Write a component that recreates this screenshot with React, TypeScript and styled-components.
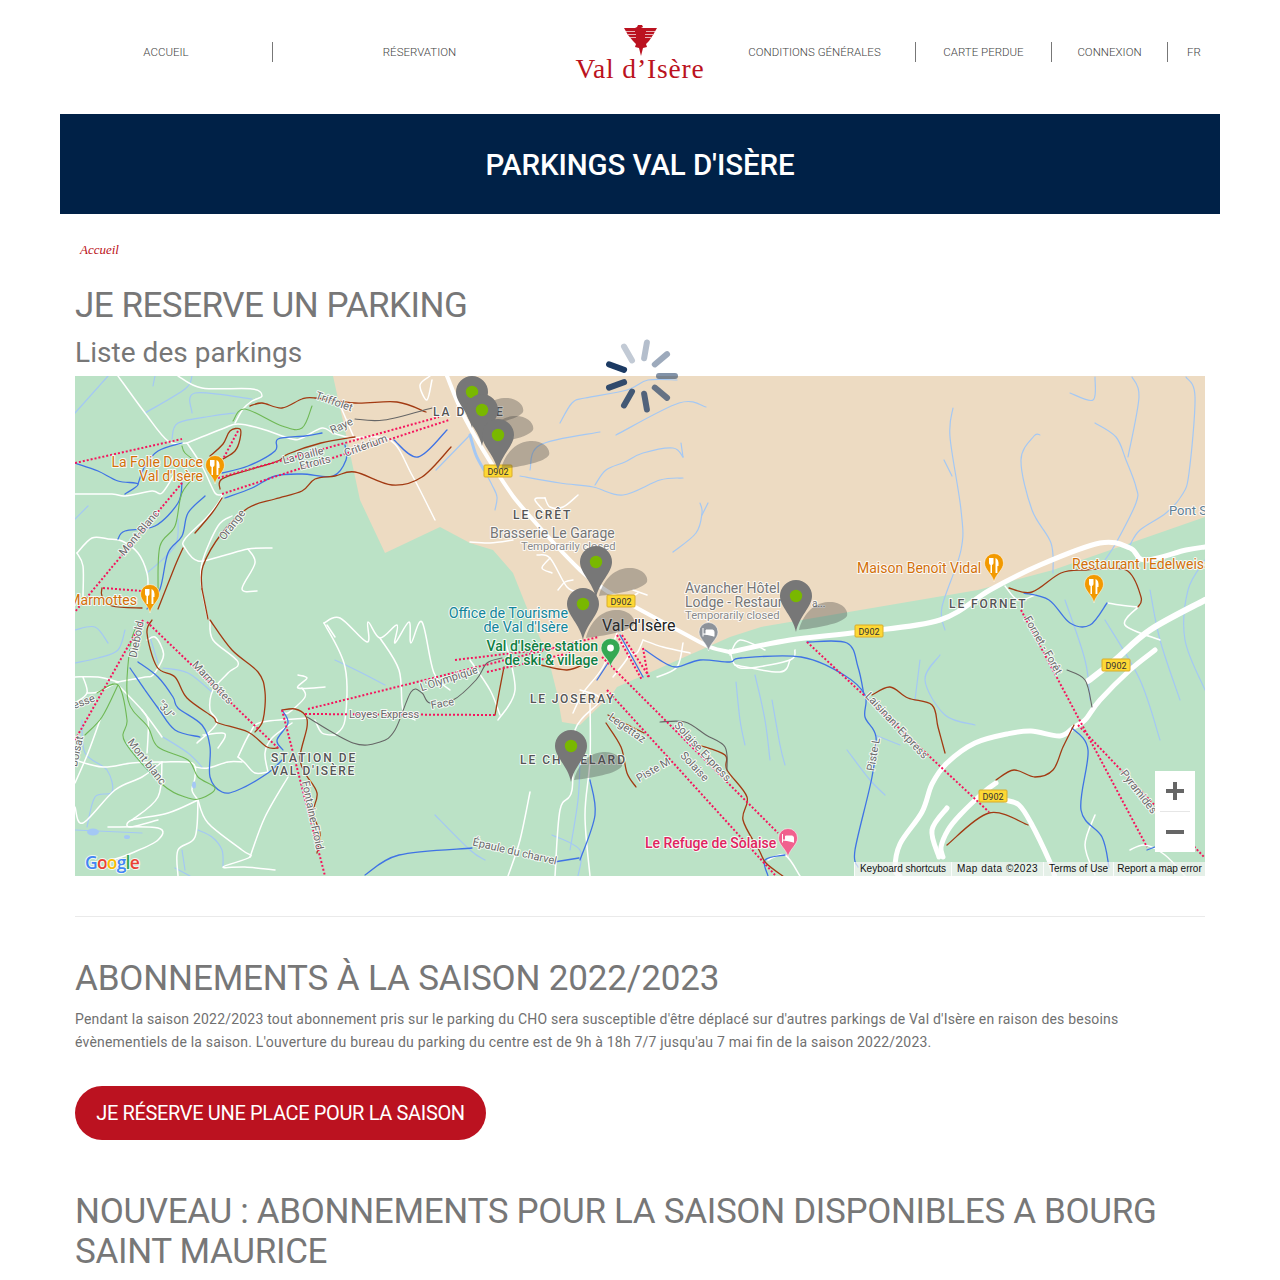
import React from "react";
import styled, { createGlobalStyle } from "styled-components";

const Global = createGlobalStyle`
  html, body { margin: 0; padding: 0; background: #fff; }
  body { font-family: Roboto, "Open Sans", sans-serif; color: #777; overflow-x: hidden; }
  * { box-sizing: border-box; }
`;

const Header = styled.header`
  height: 114px;
  margin: 0 60px;
  display: flex;
  align-items: center;
`;
const NavItem = styled.a<{ $w: number; $sep?: boolean }>`
  width: ${(p) => p.$w}px;
  height: 20px;
  margin-top: -10px;
  display: flex;
  align-items: center;
  justify-content: center;
  font-size: 11.5px;
  font-weight: 300;
  letter-spacing: 0;
  color: #444;
  border-right: ${(p) => (p.$sep ? "1px solid #777" : "none")};
`;
const Logo = styled.div`
  width: 148px;
  height: 114px;
  display: flex;
  flex-direction: column;
  align-items: center;
  padding-top: 25px;
`;
const LogoText = styled.div`
  font-family: "Liberation Serif", serif;
  font-size: 27.5px;
  line-height: 26px;
  letter-spacing: 0.85px;
  color: #bb1220;
  white-space: nowrap;
`;
const Banner = styled.div`
  height: 100px;
  margin: 0 60px;
  padding-top: 2px;
  background: #002147;
  display: flex;
  align-items: center;
  justify-content: center;
`;
const BannerTitle = styled.h1`
  margin: 0;
  color: #fff;
  font-size: 29.5px;
  font-weight: 500;
  letter-spacing: -0.1px;
`;
const Main = styled.main`
  padding: 0 75px;
`;
const Breadcrumb = styled.div`
  padding: 28px 0 0 5px;
  height: 44px;
  font-family: "Liberation Serif", serif;
  font-style: italic;
  font-size: 13px;
  line-height: 16px;
  color: #bb1220;
`;
const Heading = styled.h2<{ $top: number; $sp: number }>`
  margin: ${(p) => p.$top}px 0 0;
  font-size: 35px;
  line-height: 40px;
  font-weight: 400;
  letter-spacing: ${(p) => p.$sp}px;
  color: #777;
`;
const SubHeading = styled.h3`
  margin: 10px 0 6px;
  font-size: 28px;
  line-height: 34px;
  font-weight: 400;
  letter-spacing: 0.05px;
  color: #777;
`;
const MapBox = styled.div`
  position: relative;
  width: 1130px;
  height: 500px;
`;
const MapSvg = styled.svg`
  display: block;
  width: 1130px;
  height: 500px;
`;
const Spinner = styled.svg`
  position: absolute;
  left: 526px;
  top: -40px;
  width: 80px;
  height: 80px;
`;
const ZoomBox = styled.div`
  position: absolute;
  left: 1080px;
  top: 395px;
  width: 40px;
  height: 81px;
  background: #fff;
  display: flex;
  flex-direction: column;
  align-items: center;
`;
const ZoomButton = styled.svg`
  width: 40px;
  height: 40px;
  display: block;
`;
const ZoomRule = styled.div`
  width: 30px;
  height: 1px;
  background: #e6e6e6;
`;
const Attribution = styled.div`
  position: absolute;
  right: 0;
  bottom: 0;
  height: 14px;
  display: flex;
  font-family: "Liberation Sans", sans-serif;
  font-size: 10px;
  line-height: 14px;
  color: #111;
`;
const AttrItem = styled.span<{ $w: number; $sp?: number }>`
  width: ${(p) => p.$w}px;
  text-align: center;
  white-space: nowrap;
  letter-spacing: ${(p) => p.$sp ?? 0}px;
  background: rgba(245, 245, 245, 0.72);
  border-left: 1px solid rgba(255, 255, 255, 0.8);
`;
const Rule = styled.hr`
  margin: 40px 0 0;
  height: 1px;
  border: 0;
  background: #eaeaea;
`;
const Para = styled.p`
  margin: 9px 0 0;
  font-size: 14px;
  line-height: 23px;
  letter-spacing: 0.2px;
  color: #707070;
`;
const CtaButton = styled.a`
  margin-top: 32px;
  display: inline-flex;
  width: 411px;
  height: 54px;
  align-items: center;
  justify-content: center;
  border-radius: 27px;
  background: #bb1220;
  color: #fff;
  font-size: 20px;
  letter-spacing: -0.35px;
  white-space: nowrap;
`;
const MapText = styled.text<{ $c: string; $s: number; $w?: number; $sp?: number }>`
  font-family: Roboto, sans-serif;
  font-size: ${(p) => p.$s}px;
  font-weight: ${(p) => p.$w ?? 400};
  letter-spacing: ${(p) => p.$sp ?? 0}px;
  fill: ${(p) => p.$c};
  stroke: rgba(255, 255, 255, 0.85);
  stroke-width: 2px;
  paint-order: stroke;
  stroke-linejoin: round;
`;
const GoogleMark = styled.text`
  font-family: "Open Sans", sans-serif;
  font-size: 17.5px;
  font-weight: 600;
  letter-spacing: -0.8px;
  stroke: rgba(255, 255, 255, 0.8);
  stroke-width: 2px;
  paint-order: stroke;
`;

function smooth(s: string): string {
  const p = s.trim().split(/\s+/).map((t) => t.split(",").map(Number));
  if (p.length < 3) return `M${p.map((q) => q.join(",")).join(" L")}`;
  let d = `M${p[0][0]},${p[0][1]}`;
  for (let i = 0; i < p.length - 1; i++) {
    const a = p[Math.max(i - 1, 0)];
    const b = p[i];
    const c = p[i + 1];
    const e = p[Math.min(i + 2, p.length - 1)];
    const k = 0.17;
    d += ` C${(b[0] + (c[0] - a[0]) * k).toFixed(1)},${(b[1] + (c[1] - a[1]) * k).toFixed(1)} ${(c[0] - (e[0] - b[0]) * k).toFixed(1)},${(c[1] - (e[1] - b[1]) * k).toFixed(1)} ${c[0]},${c[1]}`;
  }
  return d;
}

const rivers = [
  "560,423 572,403 585,398 627,390 648,380 677,380",
  "616,435 679,403 706,407",
  "520,476 560,483 593,487 623,495 660,480 683,478",
  "595,485 606,470 625,462 643,453 673,448 683,457",
  "681,443 683,457",
  "673,552 696,533 702,513 700,503",
  "702,515 708,503",
  "953,408 950,437 961,510 961,550 942,607 945,630",
  "944,460 952,476",
  "1040,435 1034,436 1021,460 1032,510 1051,543 1053,573",
  "1095,377 1093,400 1070,393",
  "1095,423 1116,437 1126,460 1136,487 1136,503 1116,543 1105,560",
  "1132,377 1139,397 1128,457",
  "1186,377 1195,397 1189,473 1182,495 1166,513 1140,530 1130,545",
  "1205,560 1188,590 1185,640 1205,690",
  "1150,590 1160,640 1180,700",
  "1065,600 1085,660 1090,700",
  "1105,620 1140,680 1160,740",
  "75,413 108,376",
  "145,413 185,389 192,376",
  "192,413 195,393 252,399",
  "172,439 178,423 212,416 235,413",
  "75,519 88,506",
  "155,376 153,386",
  "147,573 175,546 178,519",
  "75,663 98,658 118,650 125,630",
  "75,630 95,627 108,643",
  "163,668 188,673 212,692",
  "163,737 188,753 202,767",
  "82,720 85,753 107,770 112,792 95,797 87,827",
  "75,830 142,833",
  "198,830 212,837 222,850 223,867",
  "182,850 185,870",
  "175,868 190,876",
  "150,637 158,663",
  "470,435 476,455 484,470 492,485 497,497 495,510",
  "530,470 540,445 600,432",
  "436,470 470,435",
  "736,682 740,720 745,745",
  "755,675 765,720 770,760",
  "772,700 780,745 785,765",
  "940,655 925,680 945,715 975,725",
  "920,660 915,700",
  "847,750 870,780 885,795",
  "875,735 900,745",
  "335,660 360,672 385,685",
  "435,815 470,850 485,860",
  "552,835 580,850 578,876",
  "580,760 578,800 570,850",
];
const roads = [
  "118,376 145,413 168,441 187,443",
  "187,443 222,429 238,424 262,429 292,439 302,438 322,428 333,433 350,438",
  "187,443 202,466 215,493 222,496 208,516 185,539 185,548 198,561 222,556 248,549 272,548",
  "248,549 255,563 242,589 257,591",
  "75,494 112,494 125,496 152,491 162,493 175,473",
  "178,376 202,388 252,389 262,396 252,401 243,409 235,423",
  "77,553 92,538 108,539 122,541 138,553 147,573 148,590",
  "77,553 83,566 83,596",
  "232,516 218,526 202,563 202,589 208,619",
  "350,438 390,440 412,475 435,520",
  "430,376 420,385 427,400 432,380",
  "340,405 355,440",
  "75,677 98,677 118,682",
  "83,677 87,693 75,703",
  "118,682 98,692 87,693",
  "118,682 145,677 153,675 163,658 162,648 155,637 147,640",
  "118,685 142,710 162,737",
  "142,710 148,720 148,737 147,753",
  "210,620 213,640 238,662 228,673 213,690 210,710 217,723 197,743",
  "203,735 222,733 225,737 218,748",
  "75,760 103,767 132,763 162,762 192,763 195,777 192,790 198,800",
  "195,767 208,768 228,762 242,762",
  "238,757 250,733 262,722 308,718",
  "198,800 168,813 132,820 130,827 158,820",
  "198,800 195,837 178,850 178,876",
  "198,800 208,823 242,850 250,857 223,867 245,867 275,870",
  "288,777 265,817 250,857",
  "162,762 158,797 132,820",
  "75,807 83,823 115,790 142,777 162,762",
  "75,783 88,753 100,720",
  "108,827 158,828 158,840 132,853 112,860",
  "327,625 335,637",
  "298,675 307,678 298,688 325,687",
  "302,688 305,697 288,713 282,710",
  "315,720 322,733 335,735",
  "238,757 245,763 255,773 268,772",
  "268,772 265,753 272,738 292,723",
  "324,623 340,618 367,642 368,622 380,638 397,625 395,643 409,622 411,643 422,622 434,673 450,690",
  "324,623 345,667 345,720 335,735",
  "380,638 399,670 403,710 415,720",
  "470,660 490,690 500,715",
  "505,640 515,690 498,720",
  "580,690 600,700 575,730 572,790 560,810 555,876",
  "590,700 590,760 585,815 590,876",
  "530,792 520,840 508,876",
  "545,498 550,507 563,507 578,495",
  "545,498 535,500 550,517",
  "470,542 490,543 513,540",
  "537,555 550,558 567,587 580,592",
  "550,558 542,568 552,573",
  "558,590 565,582 573,580",
  "633,590 647,595",
  "627,600 638,593",
  "617,633 603,667 583,693 573,713",
  "620,643 630,653 613,677",
  "643,640 663,647 690,653",
  "643,640 637,653 630,653",
  "657,677 677,667 683,643",
  "730,650 735,665 750,668 790,660 795,650",
  "730,655 740,640 765,650",
  "790,660 780,672 735,665",
  "1005,586 1018,600 1035,595",
  "1138,607 1120,605 1108,603",
  "1138,607 1125,625 1160,640",
  "1095,875 1085,845 1095,815",
  "1130,850 1145,845 1165,855 1185,876",
  "768,860 785,855 800,876",
];
const bluePistes = [
  "75,463 98,471 118,481 138,484 125,494",
  "138,484 145,466 158,451 182,443",
  "222,473 248,466 275,451 278,439 305,436 322,433",
  "394,440 418,457 447,430",
  "225,498 252,488 275,476 302,474 333,476 346,460 345,445",
  "182,483 178,503 155,526 125,531 118,539",
  "205,496 188,513 182,536 168,553 160,589 147,609",
  "130,668 145,690 158,708 175,730 200,737",
  "138,662 158,677 173,697 178,708 202,725 210,747 210,777 222,792 238,790 268,773 282,760",
  "282,710 288,723 277,740 283,750",
  "645,650 663,662 677,667 700,660 730,662 741,658 801,657 844,675 865,695 865,717 876,737 872,777 855,850 858,867",
  "807,642 847,643 858,667 864,695",
  "1024,593 1049,600 1070,623 1090,625 1107,603",
  "1072,728 1088,750 1081,810 1102,837 1109,867",
  "1147,850 1160,845",
  "365,875 399,855 472,848",
  "554,862 579,858",
  "620,635 643,677",
  "597,680 610,660",
  "768,876 765,860 785,855",
  "590,780 595,815 580,860",
];
const brownPistes = [
  "250,406 262,403 282,408 302,399 315,398 355,403 397,402 426,412",
  "210,456 223,444 230,431 240,429 240,439 235,451 223,459",
  "220,489 222,479 252,469 278,461 288,454 321,443 355,437",
  "202,589 203,566 222,533 248,508 275,499 302,491 315,479 335,476 355,472 392,485 422,477 451,447",
  "202,589 208,619",
  "195,533 212,513 222,498",
  "158,609 175,566 183,548",
  "102,588 102,596 112,606 142,608",
  "152,620 147,633 157,667 175,677 187,698 213,717 218,723 248,732 267,747 278,748",
  "210,620 232,650 258,672 265,692 263,720 255,732",
  "282,710 295,709 305,715 307,727 300,757 305,773 317,793 313,813 320,833 317,853",
  "495,715 499,693 504,667",
  "541,665 567,670 587,663",
  "608,715 644,733",
  "606,723 621,747 627,773 636,787",
  "872,695 890,687 908,698 932,705 938,727 945,753",
  "996,780 1014,770 1035,777 1053,770 1063,747 1074,725",
  "947,845 989,813 1028,825",
  "699,745 725,755 727,770 747,797 743,820 759,850 766,863 784,877",
  "1009,588 1032,592 1061,573 1086,570 1126,570 1141,597 1138,607",
];
const greyPistes = [
  "355,419 384,420 432,408",
  "307,717 353,743 380,742 395,730 411,692 422,693 430,703 453,700 476,680 487,663 502,658",
  "660,722 685,722 706,735 725,747 727,770",
  "1067,670 1085,680 1092,707",
];
const greenPistes = [
  "182,446 185,453 198,463",
  "198,473 182,493 175,526 160,546 158,589",
  "233,421 245,409 282,426 302,428 312,406",
  "138,623 130,647 128,700 148,727 158,747 188,760 198,777 215,788 202,798 188,798 163,785 125,742 127,720 118,685 97,693",
  "118,685 102,717 85,735",
];
const lifts = [
  "75,463 182,439",
  "238,431 223,459",
  "218,478 439,417",
  "222,494 449,420",
  "182,483 88,596 75,612",
  "103,588 142,591",
  "143,620 75,740",
  "147,622 278,748",
  "282,710 325,876",
  "308,709 598,637",
  "455,660 556,648",
  "487,672 570,653",
  "305,714 497,715",
  "617,635 642,680",
  "622,635 650,678",
  "643,648 648,677",
  "602,657 778,833",
  "607,690 775,875",
  "807,642 989,812",
  "1021,610 1147,847",
  "1078,725 1205,858",
];
const shields: [number, number][] = [
  [498, 471],
  [621, 601],
  [869, 631],
  [1116, 665],
  [993, 796],
];
const parks: [number, number][] = [
  [472, 428],
  [482, 446],
  [498, 471],
  [596, 598],
  [583, 640],
  [796, 632],
  [571, 782],
];
const food: [number, number][] = [
  [215, 484],
  [150, 613],
  [994, 582],
  [1094, 603],
];
type L = { x: number; y: number; t: string; c?: string; s?: number; w?: number; sp?: number; a?: "start" | "end" | "middle"; r?: number };
const O = "#d2700a";
const G = "#6a6a6a";
const D = "#555";
const labels: L[] = [
  { x: 203, y: 467, t: "La Folie Douce", c: O, s: 14, a: "end" },
  { x: 203, y: 481, t: "Val d'Isère", c: O, s: 14, a: "end" },
  { x: 137, y: 605, t: "Marmottes", c: O, s: 14, a: "end" },
  { x: 857, y: 573, t: "Maison Benoît Vidal", c: O, s: 14 },
  { x: 1072, y: 569, t: "Restaurant l'Edelweiss", c: O, s: 14 },
  { x: 1169, y: 515, t: "Pont S", c: "#5f7f95", s: 13 },
  { x: 433, y: 416, t: "LA D", c: D, s: 12, w: 500, sp: 2 },
  { x: 496, y: 416, t: "E", c: D, s: 12, w: 500, sp: 2 },
  { x: 513, y: 519, t: "LE CRÊT", c: D, s: 12, w: 500, sp: 1.9 },
  { x: 490, y: 538, t: "Brasserie Le Garage", c: "#757575", s: 14 },
  { x: 521, y: 550, t: "Temporarily closed", c: "#8a8a8a", s: 11.2 },
  { x: 685, y: 593, t: "Avancher Hôtel", c: "#757575", s: 14 },
  { x: 685, y: 607, t: "Lodge - Restaur", c: "#757575", s: 14 },
  { x: 812, y: 607, t: "a...", c: "#757575", s: 10 },
  { x: 685, y: 619, t: "Temporarily closed", c: "#8a8a8a", s: 11.2 },
  { x: 568, y: 618, t: "Office de Tourisme", c: "#12859a", s: 14.3, a: "end" },
  { x: 568, y: 632, t: "de Val d'Isère", c: "#12859a", s: 14.3, a: "end" },
  { x: 602, y: 631, t: "Val-d'Isère", c: "#222", s: 16 },
  { x: 598, y: 651, t: "Val d'Isère station", c: "#0f8043", s: 14, w: 500, a: "end" },
  { x: 598, y: 665, t: "de ski & village", c: "#0f8043", s: 14, w: 500, a: "end" },
  { x: 530, y: 703, t: "LE JOSERAY", c: D, s: 12, w: 500, sp: 1.8 },
  { x: 520, y: 764, t: "LE CH", c: D, s: 12, w: 500, sp: 2 },
  { x: 627, y: 764, t: "ELARD", c: D, s: 12, w: 500, sp: 2, a: "end" },
  { x: 271, y: 762, t: "STATION DE", c: D, s: 12, w: 500, sp: 2 },
  { x: 271, y: 775, t: "VAL D'ISÈRE", c: D, s: 12, w: 500, sp: 1.7 },
  { x: 949, y: 608, t: "LE FORNET", c: D, s: 12, w: 500, sp: 1.9 },
  { x: 645, y: 848, t: "Le Refuge de Solaise", c: "#e0245e", s: 14, w: 500 },
  { x: 333, y: 405, t: "Triffolet", c: G, s: 11, a: "middle", r: 20 },
  { x: 343, y: 429, t: "Raye", c: G, s: 11, a: "middle", r: -25 },
  { x: 304, y: 459, t: "La Daille", c: G, s: 11, a: "middle", r: -14 },
  { x: 316, y: 466, t: "Etroits", c: G, s: 11, a: "middle", r: -14 },
  { x: 367, y: 449, t: "Critérium", c: G, s: 11, a: "middle", r: -20 },
  { x: 235, y: 527, t: "Orange", c: G, s: 11, a: "middle", r: -52 },
  { x: 142, y: 535, t: "Mont-Blanc", c: G, s: 11, a: "middle", r: -50 },
  { x: 140, y: 640, t: "Diebold", c: G, s: 11, a: "middle", r: -78 },
  { x: 210, y: 685, t: "Marmottes", c: G, s: 11, a: "middle", r: 47 },
  { x: 163, y: 712, t: "\"3J\"", c: G, s: 11, a: "middle", r: 50 },
  { x: 144, y: 764, t: "Mont blanc", c: G, s: 11, a: "middle", r: 52 },
  { x: 309, y: 816, t: "Fontaine-Froid", c: G, s: 11, a: "middle", r: 78 },
  { x: 384, y: 718, t: "Loyes Express", c: G, s: 11, a: "middle" },
  { x: 450, y: 682, t: "L'Olympique", c: G, s: 11, a: "middle", r: -18 },
  { x: 443, y: 707, t: "Face", c: G, s: 11, a: "middle", r: -10 },
  { x: 625, y: 731, t: "Legettaz", c: G, s: 11, a: "middle", r: 35 },
  { x: 655, y: 773, t: "Piste M", c: G, s: 11, a: "middle", r: -30 },
  { x: 700, y: 754, t: "Solaise Express", c: G, s: 11, a: "middle", r: 47 },
  { x: 692, y: 769, t: "Solaise", c: G, s: 11, a: "middle", r: 47 },
  { x: 894, y: 728, t: "Laisinant Express", c: G, s: 11, a: "middle", r: 47 },
  { x: 877, y: 755, t: "Piste-L", c: G, s: 11, a: "middle", r: -80 },
  { x: 1040, y: 647, t: "Fornet - Forêt", c: G, s: 11, a: "middle", r: 60 },
  { x: 1136, y: 794, t: "Pyramides", c: G, s: 11, a: "middle", r: 52 },
  { x: 514, y: 855, t: "Épaule du charvel", c: G, s: 11, a: "middle", r: 13 },
  { x: 85, y: 705, t: "esse", c: G, s: 11, a: "middle", r: -20 },
  { x: 80, y: 752, t: "Bolsat", c: G, s: 11, a: "middle", r: -78 },
];

const balloon = "M0,0 C-3,-16 -16,-25 -16,-36 A16,16 0 1 1 16,-36 C16,-25 3,-16 0,0 Z";
const shadow = "M3,-2 C6,-15 16,-29 32,-30 C44,-31 53,-23 51,-16 C46,-8 20,-4 3,-2 Z";
const smallPin = "M0,0 C-1.5,-8 -9.5,-12 -9.5,-19 A9.5,9.5 0 1 1 9.5,-19 C9.5,-12 1.5,-8 0,0 Z";
const bedIcon = "M-5.5,-23 V-14.5 M-5.5,-17 H5.5 V-14.5 M-2.5,-21 H4 Q5.5,-21 5.5,-19 V-17 H-2.5 Z";

const Lines = ({ set, c, w, dash }: { set: string[]; c: string; w: number; dash?: string }) => (
  <g fill="none" stroke={c} strokeWidth={w} strokeLinecap={dash ? "butt" : "round"} strokeLinejoin="round" strokeDasharray={dash}>
    {set.map((s, i) => (
      <path key={i} d={smooth(s)} />
    ))}
  </g>
);

const MapDrawing = () => (
  <MapSvg viewBox="75 376 1130 500">
    <rect x="75" y="376" width="1130" height="500" fill="#bbe2c6" />
    <path
      d="M333,376 L345,430 L360,500 L385,553 L440,527 L470,543 L493,550 L513,573 L533,623 L547,653 L557,693 L562,722 L580,725 L613,693 L617,687 L730,637 L761,627 L978,590 L1053,570 L1205,517 L1205,376 Z"
      fill="#eddbc2"
    />
    <Lines set={rivers} c="#a4c8f4" w={1.2} />
    <Lines set={["470,435 476,455 484,470"]} c="#a4c8f4" w={3} />
    <Lines set={roads} c="#fff" w={1.5} />
    <g fill="#a4c8f4">
      <ellipse cx="93" cy="832" rx="6" ry="3.5" />
      <ellipse cx="127" cy="837" rx="3" ry="2" />
      <ellipse cx="194" cy="785" rx="2" ry="3.5" />
    </g>
    <Lines set={["447,376 466,420 502,480 527,513 580,570 610,593 637,608 683,633 710,647 730,652"]} c="#fff" w={4} />
    <Lines set={["730,652 790,640 860,632 940,620 990,590 1040,565 1100,543 1130,548 1145,560 1186,550 1205,547"]} c="#fff" w={5} />
    <Lines set={["1205,600 1150,630 1115,660 1088,681"]} c="#fff" w={6} />
    <Lines
      set={[
        "1155,650 1130,670 1100,700 1085,720 1074,727 1060,736 1031,731 1007,734 975,743 947,763 932,784 922,812 900,844 895,869 900,876",
        "996,783 984,792 960,815 948,830 941,847 943,857",
        "947,808 932,830 939,857",
        "1005,800 1019,805 1031,823 1049,860 1055,877",
      ]}
      c="#fff"
      w={5}
    />
    <Lines set={bluePistes} c="#3f73e5" w={1.3} />
    <Lines set={greenPistes} c="#6fb855" w={1.1} />
    <Lines set={brownPistes} c="#a23a12" w={1.3} />
    <Lines set={greyPistes} c="#666" w={1.1} />
    <Lines set={lifts} c="#f5145c" w={2} dash="2 2" />
    {shields.map(([x, y], i) => (
      <g key={i}>
        <rect x={x - 14} y={y - 6} width="28" height="12" rx="1" fill="#fdd835" stroke="#d9ac2a" />
        <MapText x={x} y={y + 3.5} textAnchor="middle" $c="#333" $s={9} style={{ stroke: "none" }}>
          D902
        </MapText>
      </g>
    ))}
    {labels.map((l, i) => (
      <MapText
        key={i}
        x={l.x}
        y={l.y}
        textAnchor={l.a ?? "start"}
        transform={l.r ? `rotate(${l.r} ${l.x} ${l.y})` : undefined}
        $c={l.c ?? G}
        $s={l.s ?? 11}
        $w={l.w}
        $sp={l.sp}
      >
        {l.t}
      </MapText>
    ))}
    {food.map(([x, y], i) => (
      <g key={i} transform={`translate(${x},${y})`}>
        <path d={smallPin} fill="#f29900" stroke="#fff" strokeWidth="0.5" />
        <path d="M-5,-24 V-19 Q-5,-17.5 -3.5,-17 V-9 H-2 V-17 Q-0.5,-17.5 -0.5,-19 V-24 M1.5,-24 Q5,-23 4.5,-16 H3.4 V-9 H1.5 Z" fill="#fff" />
      </g>
    ))}
    <g transform="translate(708.5,651)">
      <path d={smallPin} fill="#8d939a" stroke="#fff" strokeWidth="0.5" />
      <path d={bedIcon} fill="#fff" stroke="#fff" strokeWidth="1" />
    </g>
    <g transform="translate(610.5,667)">
      <path d={smallPin} fill="#34a853" stroke="#fff" strokeWidth="0.5" />
      <circle cx="0" cy="-19" r="3.4" fill="#fff" />
    </g>
    <g transform="translate(788,857)">
      <path d={smallPin} fill="#f1618e" stroke="#fff" strokeWidth="0.5" />
      <path d={bedIcon} fill="#fff" stroke="#fff" strokeWidth="1" />
    </g>
    {parks.map(([x, y], i) => (
      <path key={i} transform={`translate(${x},${y})`} d={shadow} fill="#3c3c3c" opacity="0.33" />
    ))}
    {parks.map(([x, y], i) => (
      <g key={i} transform={`translate(${x},${y})`}>
        <path d={balloon} fill="#777" />
        <circle cx="0" cy="-36" r="6.2" fill="#79b800" />
      </g>
    ))}
    <GoogleMark x="85" y="869">
      <tspan fill="#4285f4">G</tspan>
      <tspan fill="#ea4335">o</tspan>
      <tspan fill="#fbbc05">o</tspan>
      <tspan fill="#4285f4">g</tspan>
      <tspan fill="#34a853">l</tspan>
      <tspan fill="#ea4335">e</tspan>
    </GoogleMark>
  </MapSvg>
);

const Eagle = () => (
  <svg width="33" height="31" viewBox="0 0 33 31">
    <path
      d="M0,3 H11 L13,2 L14,0 L18,0 L19,2 L17,3 H33 L29,10 L25,16 L22,19 L23,22 L19,23 L17,31 L15,23 L11,22 L12,19 L9,16 L4,10 Z"
      fill="#bb1220"
    />
    <path d="M2,6.5 H11 M4,9.5 H12 M6,12.5 H12 M31,6.5 H22 M29,9.5 H21 M27,12.5 H21" stroke="#fff" strokeWidth="0.9" opacity="0.75" />
  </svg>
);

const SpinnerMark = () => (
  <Spinner viewBox="-40 -40 80 80">
    {[0.55, 0.65, 0.75, 0.82, 0.9, 1, 0.27, 0.33, 0.43].map((o, i) => (
      <rect
        key={i}
        x="15"
        y="-3"
        width="22"
        height="6"
        rx="3"
        fill="#1c3a63"
        opacity={o}
        transform={`rotate(${i * 40})`}
      />
    ))}
  </Spinner>
);

export default function App() {
  return (
    <>
      <Global />
      <Header>
        <NavItem $w={213} $sep>ACCUEIL</NavItem>
        <NavItem $w={293}>RÉSERVATION</NavItem>
        <Logo>
          <Eagle />
          <LogoText>Val d’Isère</LogoText>
        </Logo>
        <NavItem $w={202} $sep>CONDITIONS GÉNÉRALES</NavItem>
        <NavItem $w={136} $sep>CARTE PERDUE</NavItem>
        <NavItem $w={116} $sep>CONNEXION</NavItem>
        <NavItem $w={52}>FR</NavItem>
      </Header>
      <Banner>
        <BannerTitle>PARKINGS VAL D'ISÈRE</BannerTitle>
      </Banner>
      <Main>
        <Breadcrumb>Accueil</Breadcrumb>
        <Heading $top={28} $sp={-0.5}>JE RESERVE UN PARKING</Heading>
        <SubHeading>Liste des parkings</SubHeading>
        <MapBox>
          <MapDrawing />
          <SpinnerMark />
          <ZoomBox>
            <ZoomButton viewBox="0 0 40 40">
              <path d="M11,20 H29 M20,11 V29" stroke="#666" strokeWidth="4" />
            </ZoomButton>
            <ZoomRule />
            <ZoomButton viewBox="0 0 40 40">
              <path d="M11,20 H29" stroke="#666" strokeWidth="4" />
            </ZoomButton>
          </ZoomBox>
          <Attribution>
            <AttrItem $w={97}>Keyboard shortcuts</AttrItem>
            <AttrItem $w={92} $sp={0.5}>Map data ©2023</AttrItem>
            <AttrItem $w={70}>Terms of Use</AttrItem>
            <AttrItem $w={92}>Report a map error</AttrItem>
          </Attribution>
        </MapBox>
        <Rule />
        <Heading $top={42} $sp={-0.15}>ABONNEMENTS À LA SAISON 2022/2023</Heading>
        <Para>
          Pendant la saison 2022/2023 tout abonnement pris sur le parking du CHO sera susceptible d'être déplacé sur d'autres parkings de Val d'Isère en raison des besoins évènementiels de la saison. L'ouverture du bureau du parking du centre est de 9h à 18h 7/7 jusqu'au 7 mai fin de la saison 2022/2023.
        </Para>
        <CtaButton>JE RÉSERVE UNE PLACE POUR LA SAISON</CtaButton>
        <Heading $top={52} $sp={-0.32}>NOUVEAU : ABONNEMENTS POUR LA SAISON DISPONIBLES A BOURG SAINT MAURICE</Heading>
      </Main>
    </>
  );
}
